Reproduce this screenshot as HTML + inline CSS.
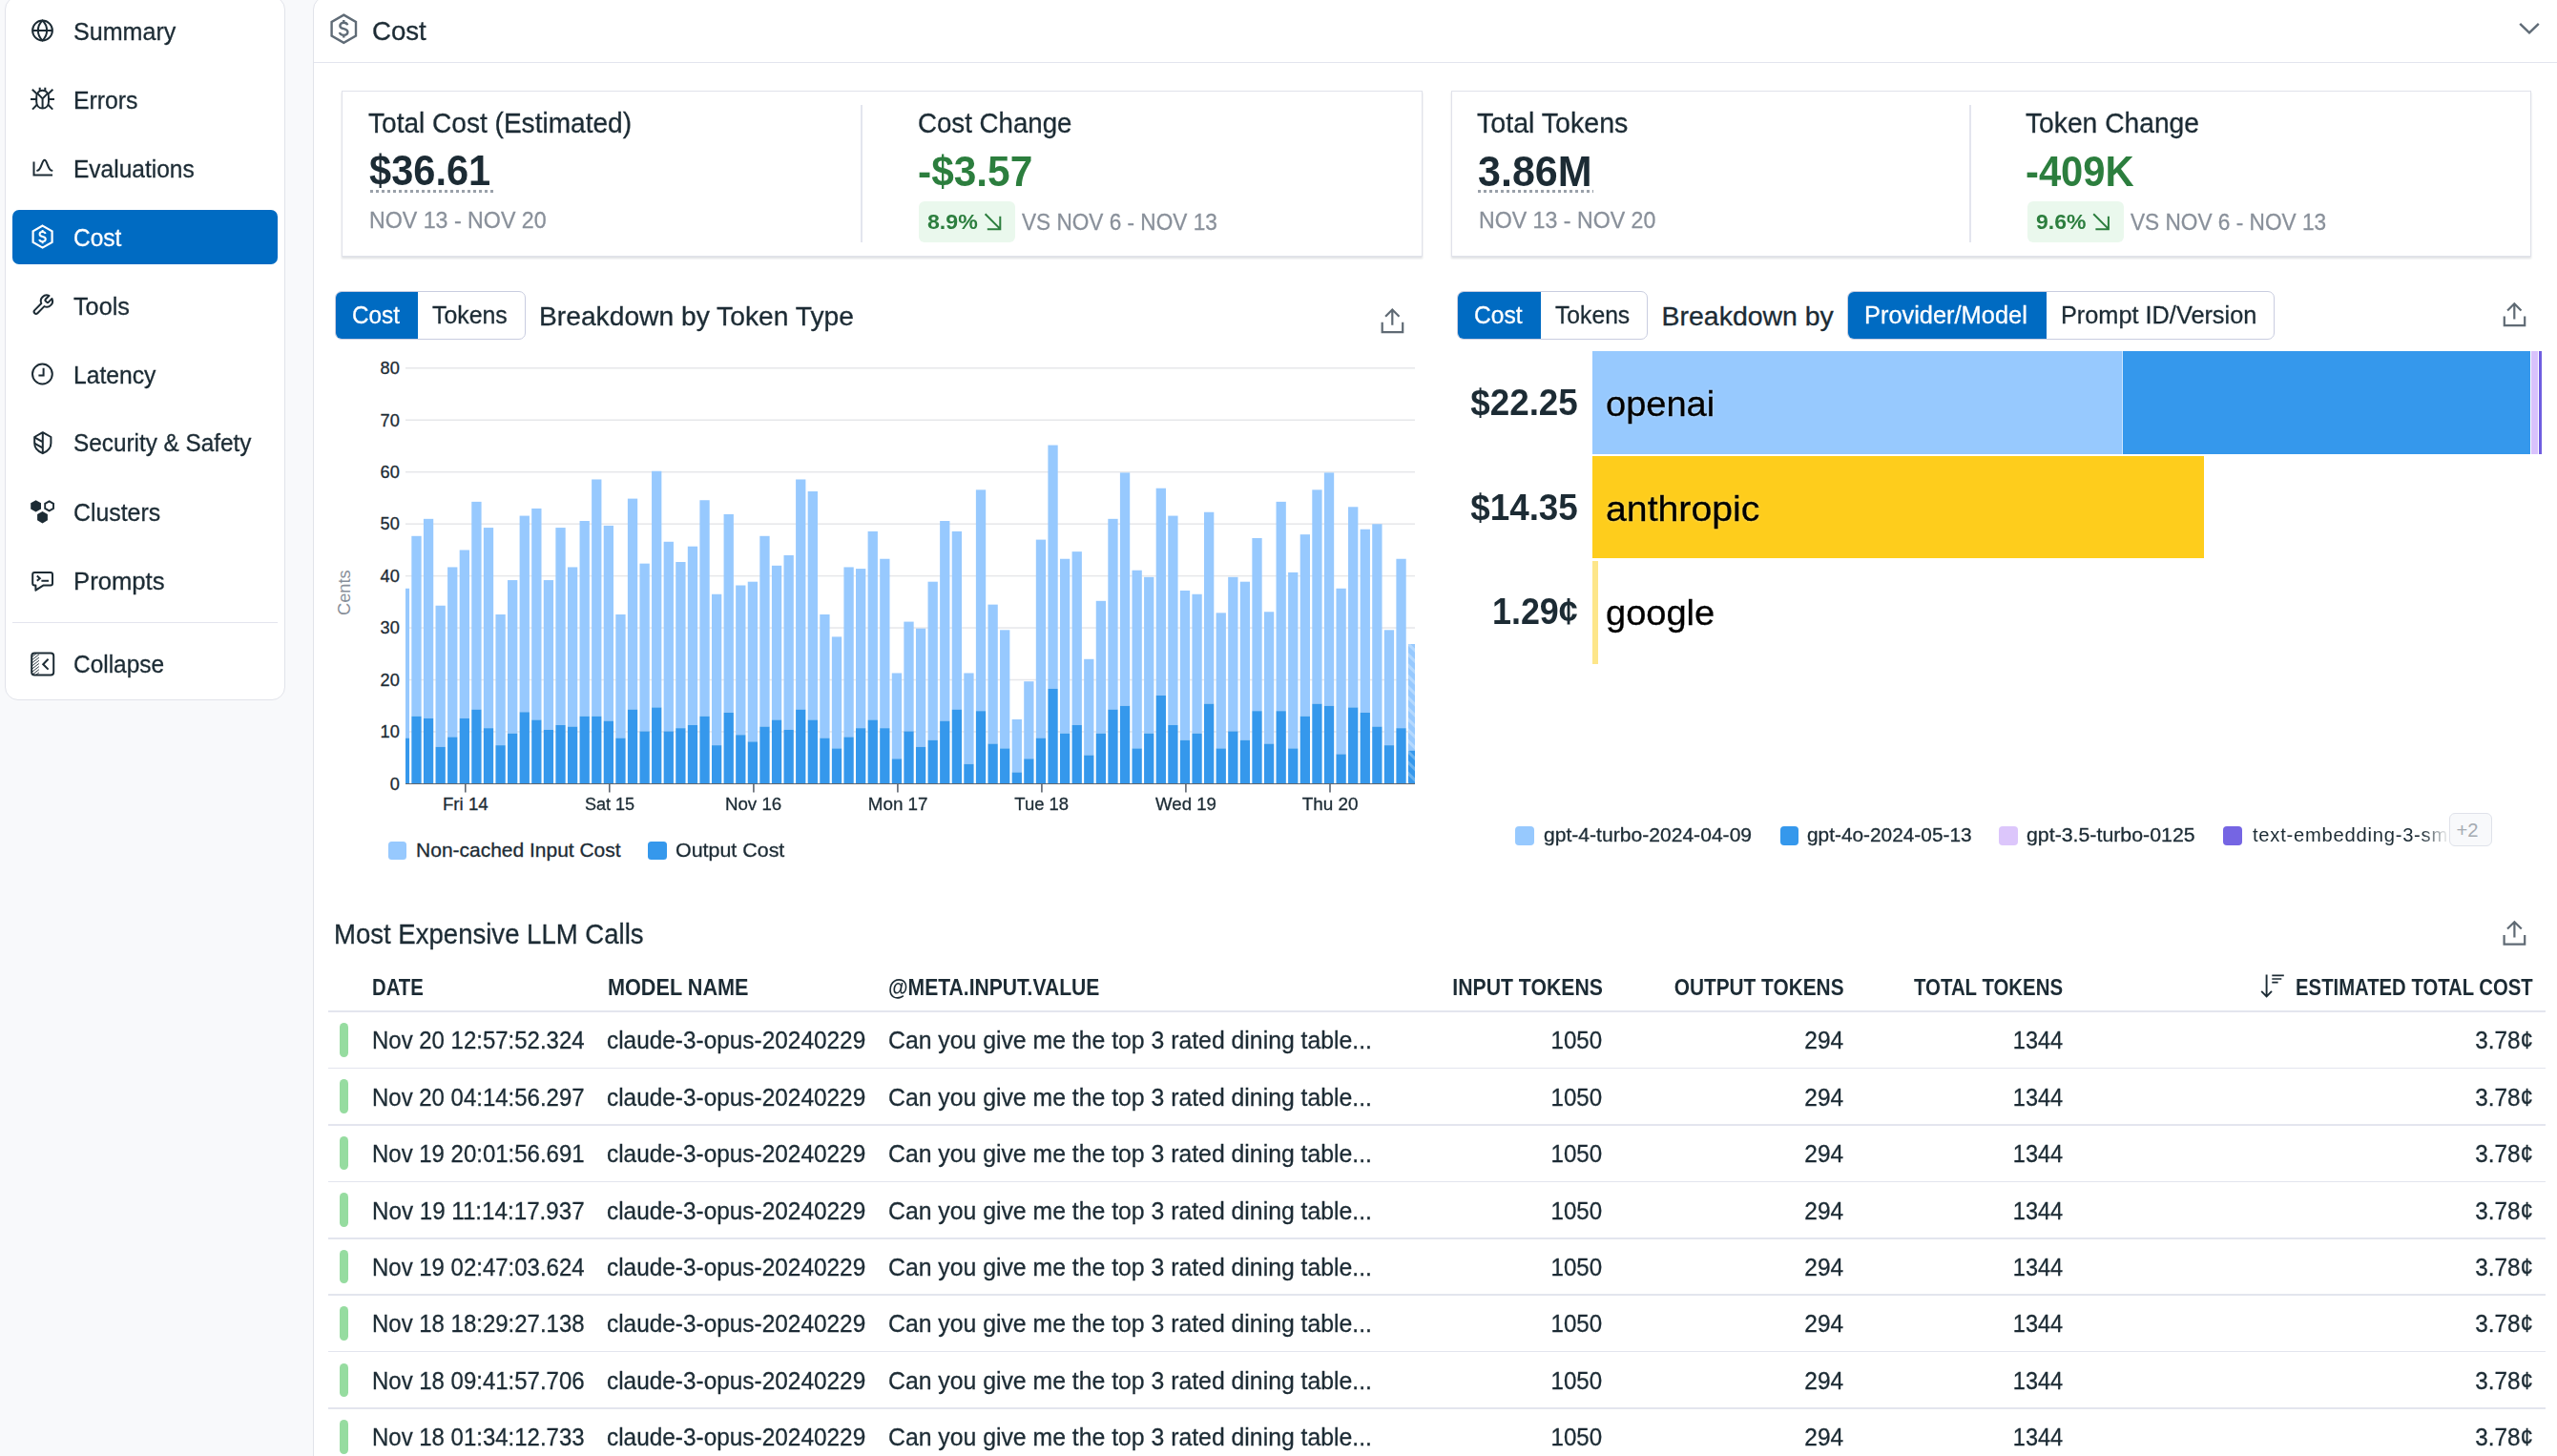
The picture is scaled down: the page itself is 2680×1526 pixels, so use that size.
<!DOCTYPE html>
<html><head><meta charset="utf-8">
<style>
html,body{margin:0;padding:0;background:#f8f9fb;}
#root{position:relative;width:2680px;height:1526px;overflow:hidden;background:#f8f9fb;font-family:"Liberation Sans",sans-serif;}
.a{position:absolute;box-sizing:border-box;}
.t{position:absolute;line-height:1;white-space:nowrap;font-family:"Liberation Sans",sans-serif;}
</style></head><body><div id="root">
<!-- sidebar card -->
<div class="a" style="left:5px;top:-4px;width:294px;height:738px;background:#fff;border:1.5px solid #e1e3ea;border-radius:14px;"></div>
<div class="a" style="left:13px;top:220px;width:278px;height:57px;background:#006bc2;border-radius:7px;"></div>
<div class="a" style="left:13px;top:651.8px;width:278px;height:1.5px;background:#e3e5ee;"></div>
<!-- main panel -->
<div class="a" style="left:328px;top:-4px;width:2400px;height:1600px;background:#fff;border:1.5px solid #e1e3ea;border-radius:14px;"></div>
<div class="a" style="left:329px;top:64.6px;width:2360px;height:1.5px;background:#e3e5ee;"></div>
<!-- stat cards -->
<div class="a" style="left:358px;top:95px;width:1133px;height:173.5px;background:#fff;border:1.5px solid #e0e2ea;box-shadow:0 1.5px 2px rgba(30,40,60,.14);"></div>
<div class="a" style="left:1520.5px;top:95px;width:1132px;height:173.5px;background:#fff;border:1.5px solid #e0e2ea;box-shadow:0 1.5px 2px rgba(30,40,60,.14);"></div>
<div class="a" style="left:902.4px;top:110px;width:2px;height:144px;background:#e3e5ee;"></div>
<div class="a" style="left:2064.4px;top:110px;width:2px;height:144px;background:#e3e5ee;"></div>
<div class="a" style="left:963px;top:211px;width:100.6px;height:43px;background:#eaf8ed;border-radius:6px;"></div>
<div class="a" style="left:2125px;top:211px;width:100.6px;height:43px;background:#eaf8ed;border-radius:6px;"></div>
<div class="a" style="left:387.5px;top:199px;width:129px;height:3px;background:repeating-linear-gradient(90deg,#9aa1a9 0 3px,transparent 3px 6px);"></div>
<div class="a" style="left:1549.4px;top:199px;width:121px;height:3px;background:repeating-linear-gradient(90deg,#9aa1a9 0 3px,transparent 3px 6px);"></div>
<!-- segmented controls -->
<div class="a" style="left:351px;top:305.3px;width:199.5px;height:50.4px;border:1.5px solid #c9cde0;border-radius:7px;overflow:hidden;background:#fff;"><div class="a" style="left:-1.5px;top:-1.5px;width:87.5px;height:50.4px;background:#006bc2;"></div></div>
<div class="a" style="left:1527.1px;top:305.3px;width:199.8px;height:50.4px;border:1.5px solid #c9cde0;border-radius:7px;overflow:hidden;background:#fff;"><div class="a" style="left:-1.5px;top:-1.5px;width:88.3px;height:50.4px;background:#006bc2;"></div></div>
<div class="a" style="left:1936.1px;top:305.2px;width:448px;height:50.5px;border:1.5px solid #c9cde0;border-radius:7px;overflow:hidden;background:#fff;"><div class="a" style="left:-1.5px;top:-1.5px;width:209.2px;height:50.5px;background:#006bc2;"></div></div>
<!-- left chart -->
<svg class="a" style="left:425px;top:350px;" width="1058" height="490" viewBox="0 0 1058 490">
<defs>
<pattern id="hatchL" patternUnits="userSpaceOnUse" width="8" height="8" patternTransform="rotate(-45)"><rect width="8" height="8" fill="#97c9fe"/><rect width="3" height="8" fill="#b5d9fe"/></pattern>
<pattern id="hatchD" patternUnits="userSpaceOnUse" width="8" height="8" patternTransform="rotate(-45)"><rect width="8" height="8" fill="#3598ec"/><rect width="3" height="8" fill="#6ab3f1"/></pattern>
</defs>
<rect x='0' y='35.05' width='1058' height='1.5' fill='#e6e7ea'/>
<rect x='0' y='89.50' width='1058' height='1.5' fill='#e6e7ea'/>
<rect x='0' y='143.95' width='1058' height='1.5' fill='#e6e7ea'/>
<rect x='0' y='198.40' width='1058' height='1.5' fill='#e6e7ea'/>
<rect x='0' y='252.85' width='1058' height='1.5' fill='#e6e7ea'/>
<rect x='0' y='307.30' width='1058' height='1.5' fill='#e6e7ea'/>
<rect x='0' y='361.75' width='1058' height='1.5' fill='#e6e7ea'/>
<rect x='0' y='416.20' width='1058' height='1.5' fill='#e6e7ea'/>
<rect x='-6.25' y='266.76' width='10.3' height='156.74' fill='#97c9fe'/>
<rect x='-6.25' y='423.51' width='10.3' height='47.89' fill='#3598ec'/>
<rect x='6.34' y='211.79' width='10.3' height='188.85' fill='#97c9fe'/>
<rect x='6.34' y='400.65' width='10.3' height='70.75' fill='#3598ec'/>
<rect x='18.92' y='193.83' width='10.3' height='208.99' fill='#97c9fe'/>
<rect x='18.92' y='402.82' width='10.3' height='68.58' fill='#3598ec'/>
<rect x='31.51' y='284.72' width='10.3' height='148.04' fill='#97c9fe'/>
<rect x='31.51' y='432.76' width='10.3' height='38.64' fill='#3598ec'/>
<rect x='44.09' y='244.45' width='10.3' height='177.97' fill='#97c9fe'/>
<rect x='44.09' y='422.42' width='10.3' height='48.98' fill='#3598ec'/>
<rect x='56.68' y='226.49' width='10.3' height='176.34' fill='#97c9fe'/>
<rect x='56.68' y='402.82' width='10.3' height='68.58' fill='#3598ec'/>
<rect x='69.27' y='175.87' width='10.3' height='217.70' fill='#97c9fe'/>
<rect x='69.27' y='393.57' width='10.3' height='77.83' fill='#3598ec'/>
<rect x='81.85' y='203.08' width='10.3' height='210.08' fill='#97c9fe'/>
<rect x='81.85' y='413.17' width='10.3' height='58.23' fill='#3598ec'/>
<rect x='94.44' y='293.97' width='10.3' height='137.15' fill='#97c9fe'/>
<rect x='94.44' y='431.13' width='10.3' height='40.27' fill='#3598ec'/>
<rect x='107.02' y='258.05' width='10.3' height='160.55' fill='#97c9fe'/>
<rect x='107.02' y='418.61' width='10.3' height='52.79' fill='#3598ec'/>
<rect x='119.61' y='190.57' width='10.3' height='205.73' fill='#97c9fe'/>
<rect x='119.61' y='396.29' width='10.3' height='75.11' fill='#3598ec'/>
<rect x='132.20' y='182.95' width='10.3' height='221.51' fill='#97c9fe'/>
<rect x='132.20' y='404.46' width='10.3' height='66.94' fill='#3598ec'/>
<rect x='144.78' y='258.05' width='10.3' height='156.74' fill='#97c9fe'/>
<rect x='144.78' y='414.80' width='10.3' height='56.60' fill='#3598ec'/>
<rect x='157.37' y='203.08' width='10.3' height='206.81' fill='#97c9fe'/>
<rect x='157.37' y='409.90' width='10.3' height='61.50' fill='#3598ec'/>
<rect x='169.95' y='244.45' width='10.3' height='167.08' fill='#97c9fe'/>
<rect x='169.95' y='411.53' width='10.3' height='59.87' fill='#3598ec'/>
<rect x='182.54' y='196.01' width='10.3' height='204.64' fill='#97c9fe'/>
<rect x='182.54' y='400.65' width='10.3' height='70.75' fill='#3598ec'/>
<rect x='195.13' y='152.47' width='10.3' height='248.18' fill='#97c9fe'/>
<rect x='195.13' y='400.65' width='10.3' height='70.75' fill='#3598ec'/>
<rect x='207.71' y='200.91' width='10.3' height='204.64' fill='#97c9fe'/>
<rect x='207.71' y='405.55' width='10.3' height='65.85' fill='#3598ec'/>
<rect x='220.30' y='293.97' width='10.3' height='129.53' fill='#97c9fe'/>
<rect x='220.30' y='423.51' width='10.3' height='47.89' fill='#3598ec'/>
<rect x='232.88' y='172.61' width='10.3' height='220.97' fill='#97c9fe'/>
<rect x='232.88' y='393.57' width='10.3' height='77.83' fill='#3598ec'/>
<rect x='245.47' y='240.64' width='10.3' height='175.79' fill='#97c9fe'/>
<rect x='245.47' y='416.43' width='10.3' height='54.97' fill='#3598ec'/>
<rect x='258.06' y='143.76' width='10.3' height='247.63' fill='#97c9fe'/>
<rect x='258.06' y='391.40' width='10.3' height='80.00' fill='#3598ec'/>
<rect x='270.64' y='217.78' width='10.3' height='198.65' fill='#97c9fe'/>
<rect x='270.64' y='416.43' width='10.3' height='54.97' fill='#3598ec'/>
<rect x='283.23' y='239.01' width='10.3' height='174.16' fill='#97c9fe'/>
<rect x='283.23' y='413.17' width='10.3' height='58.23' fill='#3598ec'/>
<rect x='295.81' y='222.68' width='10.3' height='187.22' fill='#97c9fe'/>
<rect x='295.81' y='409.90' width='10.3' height='61.50' fill='#3598ec'/>
<rect x='308.40' y='174.24' width='10.3' height='226.41' fill='#97c9fe'/>
<rect x='308.40' y='400.65' width='10.3' height='70.75' fill='#3598ec'/>
<rect x='320.99' y='272.75' width='10.3' height='158.38' fill='#97c9fe'/>
<rect x='320.99' y='431.13' width='10.3' height='40.27' fill='#3598ec'/>
<rect x='333.57' y='188.93' width='10.3' height='207.90' fill='#97c9fe'/>
<rect x='333.57' y='396.84' width='10.3' height='74.56' fill='#3598ec'/>
<rect x='346.16' y='263.50' width='10.3' height='156.74' fill='#97c9fe'/>
<rect x='346.16' y='420.24' width='10.3' height='51.16' fill='#3598ec'/>
<rect x='358.74' y='259.69' width='10.3' height='167.63' fill='#97c9fe'/>
<rect x='358.74' y='427.32' width='10.3' height='44.08' fill='#3598ec'/>
<rect x='371.33' y='211.79' width='10.3' height='199.74' fill='#97c9fe'/>
<rect x='371.33' y='411.53' width='10.3' height='59.87' fill='#3598ec'/>
<rect x='383.92' y='242.81' width='10.3' height='161.64' fill='#97c9fe'/>
<rect x='383.92' y='404.46' width='10.3' height='66.94' fill='#3598ec'/>
<rect x='396.50' y='231.93' width='10.3' height='182.87' fill='#97c9fe'/>
<rect x='396.50' y='414.80' width='10.3' height='56.60' fill='#3598ec'/>
<rect x='409.09' y='152.47' width='10.3' height='241.10' fill='#97c9fe'/>
<rect x='409.09' y='393.57' width='10.3' height='77.83' fill='#3598ec'/>
<rect x='421.67' y='164.99' width='10.3' height='239.47' fill='#97c9fe'/>
<rect x='421.67' y='404.46' width='10.3' height='66.94' fill='#3598ec'/>
<rect x='434.26' y='293.97' width='10.3' height='129.53' fill='#97c9fe'/>
<rect x='434.26' y='423.51' width='10.3' height='47.89' fill='#3598ec'/>
<rect x='446.85' y='317.38' width='10.3' height='117.01' fill='#97c9fe'/>
<rect x='446.85' y='434.39' width='10.3' height='37.01' fill='#3598ec'/>
<rect x='459.43' y='244.45' width='10.3' height='177.97' fill='#97c9fe'/>
<rect x='459.43' y='422.42' width='10.3' height='48.98' fill='#3598ec'/>
<rect x='472.02' y='246.08' width='10.3' height='167.08' fill='#97c9fe'/>
<rect x='472.02' y='413.17' width='10.3' height='58.23' fill='#3598ec'/>
<rect x='484.60' y='206.89' width='10.3' height='197.56' fill='#97c9fe'/>
<rect x='484.60' y='404.46' width='10.3' height='66.94' fill='#3598ec'/>
<rect x='497.19' y='235.74' width='10.3' height='177.43' fill='#97c9fe'/>
<rect x='497.19' y='413.17' width='10.3' height='58.23' fill='#3598ec'/>
<rect x='509.78' y='355.47' width='10.3' height='89.80' fill='#97c9fe'/>
<rect x='509.78' y='445.28' width='10.3' height='26.12' fill='#3598ec'/>
<rect x='522.36' y='301.59' width='10.3' height='114.84' fill='#97c9fe'/>
<rect x='522.36' y='416.43' width='10.3' height='54.97' fill='#3598ec'/>
<rect x='534.95' y='308.67' width='10.3' height='124.09' fill='#97c9fe'/>
<rect x='534.95' y='432.76' width='10.3' height='38.64' fill='#3598ec'/>
<rect x='547.53' y='259.69' width='10.3' height='166.00' fill='#97c9fe'/>
<rect x='547.53' y='425.68' width='10.3' height='45.72' fill='#3598ec'/>
<rect x='560.12' y='196.01' width='10.3' height='209.54' fill='#97c9fe'/>
<rect x='560.12' y='405.55' width='10.3' height='65.85' fill='#3598ec'/>
<rect x='572.71' y='206.89' width='10.3' height='186.68' fill='#97c9fe'/>
<rect x='572.71' y='393.57' width='10.3' height='77.83' fill='#3598ec'/>
<rect x='585.29' y='355.47' width='10.3' height='95.24' fill='#97c9fe'/>
<rect x='585.29' y='450.72' width='10.3' height='20.68' fill='#3598ec'/>
<rect x='597.88' y='163.35' width='10.3' height='231.85' fill='#97c9fe'/>
<rect x='597.88' y='395.20' width='10.3' height='76.20' fill='#3598ec'/>
<rect x='610.46' y='283.63' width='10.3' height='145.86' fill='#97c9fe'/>
<rect x='610.46' y='429.49' width='10.3' height='41.91' fill='#3598ec'/>
<rect x='623.05' y='310.30' width='10.3' height='124.09' fill='#97c9fe'/>
<rect x='623.05' y='434.39' width='10.3' height='37.01' fill='#3598ec'/>
<rect x='635.64' y='403.91' width='10.3' height='55.51' fill='#97c9fe'/>
<rect x='635.64' y='459.43' width='10.3' height='11.97' fill='#3598ec'/>
<rect x='648.22' y='364.18' width='10.3' height='81.09' fill='#97c9fe'/>
<rect x='648.22' y='445.28' width='10.3' height='26.12' fill='#3598ec'/>
<rect x='660.81' y='215.60' width='10.3' height='207.90' fill='#97c9fe'/>
<rect x='660.81' y='423.51' width='10.3' height='47.89' fill='#3598ec'/>
<rect x='673.39' y='116.55' width='10.3' height='255.25' fill='#97c9fe'/>
<rect x='673.39' y='371.80' width='10.3' height='99.60' fill='#3598ec'/>
<rect x='685.98' y='235.74' width='10.3' height='182.87' fill='#97c9fe'/>
<rect x='685.98' y='418.61' width='10.3' height='52.79' fill='#3598ec'/>
<rect x='698.57' y='228.12' width='10.3' height='181.78' fill='#97c9fe'/>
<rect x='698.57' y='409.90' width='10.3' height='61.50' fill='#3598ec'/>
<rect x='711.15' y='340.78' width='10.3' height='100.69' fill='#97c9fe'/>
<rect x='711.15' y='441.47' width='10.3' height='29.93' fill='#3598ec'/>
<rect x='723.74' y='279.82' width='10.3' height='138.78' fill='#97c9fe'/>
<rect x='723.74' y='418.61' width='10.3' height='52.79' fill='#3598ec'/>
<rect x='736.32' y='193.83' width='10.3' height='199.74' fill='#97c9fe'/>
<rect x='736.32' y='393.57' width='10.3' height='77.83' fill='#3598ec'/>
<rect x='748.91' y='145.39' width='10.3' height='244.37' fill='#97c9fe'/>
<rect x='748.91' y='389.76' width='10.3' height='81.64' fill='#3598ec'/>
<rect x='761.50' y='247.71' width='10.3' height='186.68' fill='#97c9fe'/>
<rect x='761.50' y='434.39' width='10.3' height='37.01' fill='#3598ec'/>
<rect x='774.08' y='254.79' width='10.3' height='163.82' fill='#97c9fe'/>
<rect x='774.08' y='418.61' width='10.3' height='52.79' fill='#3598ec'/>
<rect x='786.67' y='161.72' width='10.3' height='217.16' fill='#97c9fe'/>
<rect x='786.67' y='378.88' width='10.3' height='92.52' fill='#3598ec'/>
<rect x='799.25' y='190.57' width='10.3' height='219.33' fill='#97c9fe'/>
<rect x='799.25' y='409.90' width='10.3' height='61.50' fill='#3598ec'/>
<rect x='811.84' y='268.94' width='10.3' height='156.74' fill='#97c9fe'/>
<rect x='811.84' y='425.68' width='10.3' height='45.72' fill='#3598ec'/>
<rect x='824.43' y='272.75' width='10.3' height='145.86' fill='#97c9fe'/>
<rect x='824.43' y='418.61' width='10.3' height='52.79' fill='#3598ec'/>
<rect x='837.01' y='186.76' width='10.3' height='200.83' fill='#97c9fe'/>
<rect x='837.01' y='387.59' width='10.3' height='83.81' fill='#3598ec'/>
<rect x='849.60' y='292.34' width='10.3' height='142.05' fill='#97c9fe'/>
<rect x='849.60' y='434.39' width='10.3' height='37.01' fill='#3598ec'/>
<rect x='862.18' y='254.79' width='10.3' height='161.64' fill='#97c9fe'/>
<rect x='862.18' y='416.43' width='10.3' height='54.97' fill='#3598ec'/>
<rect x='874.77' y='259.69' width='10.3' height='166.00' fill='#97c9fe'/>
<rect x='874.77' y='425.68' width='10.3' height='45.72' fill='#3598ec'/>
<rect x='887.36' y='213.97' width='10.3' height='181.24' fill='#97c9fe'/>
<rect x='887.36' y='395.20' width='10.3' height='76.20' fill='#3598ec'/>
<rect x='899.94' y='291.25' width='10.3' height='138.24' fill='#97c9fe'/>
<rect x='899.94' y='429.49' width='10.3' height='41.91' fill='#3598ec'/>
<rect x='912.53' y='175.87' width='10.3' height='219.33' fill='#97c9fe'/>
<rect x='912.53' y='395.20' width='10.3' height='76.20' fill='#3598ec'/>
<rect x='925.11' y='249.89' width='10.3' height='184.50' fill='#97c9fe'/>
<rect x='925.11' y='434.39' width='10.3' height='37.01' fill='#3598ec'/>
<rect x='937.70' y='210.16' width='10.3' height='190.49' fill='#97c9fe'/>
<rect x='937.70' y='400.65' width='10.3' height='70.75' fill='#3598ec'/>
<rect x='950.29' y='163.35' width='10.3' height='224.23' fill='#97c9fe'/>
<rect x='950.29' y='387.59' width='10.3' height='83.81' fill='#3598ec'/>
<rect x='962.87' y='145.39' width='10.3' height='244.37' fill='#97c9fe'/>
<rect x='962.87' y='389.76' width='10.3' height='81.64' fill='#3598ec'/>
<rect x='975.46' y='266.76' width='10.3' height='173.62' fill='#97c9fe'/>
<rect x='975.46' y='440.38' width='10.3' height='31.02' fill='#3598ec'/>
<rect x='988.04' y='181.31' width='10.3' height='210.08' fill='#97c9fe'/>
<rect x='988.04' y='391.40' width='10.3' height='80.00' fill='#3598ec'/>
<rect x='1000.63' y='204.72' width='10.3' height='192.12' fill='#97c9fe'/>
<rect x='1000.63' y='396.84' width='10.3' height='74.56' fill='#3598ec'/>
<rect x='1013.22' y='199.27' width='10.3' height='212.26' fill='#97c9fe'/>
<rect x='1013.22' y='411.53' width='10.3' height='59.87' fill='#3598ec'/>
<rect x='1025.80' y='310.30' width='10.3' height='120.82' fill='#97c9fe'/>
<rect x='1025.80' y='431.13' width='10.3' height='40.27' fill='#3598ec'/>
<rect x='1038.39' y='235.74' width='10.3' height='177.43' fill='#97c9fe'/>
<rect x='1038.39' y='413.17' width='10.3' height='58.23' fill='#3598ec'/>
<rect x='1050.97' y='325.00' width='10.3' height='111.57' fill='url(#hatchL)'/>
<rect x='1050.97' y='436.57' width='10.3' height='34.83' fill='url(#hatchD)'/>
</svg>
<div class="a" style="left:425px;top:820.8px;width:1058px;height:1.6px;background:#5f6670;"></div>
<div class="a" style="left:407.2px;top:881.8px;width:18.8px;height:19.7px;background:#97c9fe;border-radius:3.5px;"></div>
<div class="a" style="left:679px;top:881.8px;width:19.7px;height:19.7px;background:#3598ec;border-radius:3.5px;"></div>
<div class="t" style="font-size:18.3px;color:#89909a;transform:rotate(-90deg);transform-origin:0 0;top:645.2px;left:351.8px;">Cents</div>
<!-- right bar chart -->
<div class="a" style="left:1669.4px;top:368px;width:554.6px;height:107.7px;background:#97c9fe;"></div><div class="a" style="left:2224px;top:368px;width:1px;height:107.7px;background:#cfe6fe;"></div>
<div class="a" style="left:2225px;top:368px;width:426.8px;height:107.7px;background:#3598ec;"></div>
<div class="a" style="left:2652.8px;top:368px;width:7.4px;height:107.7px;background:#d8c2fc;"></div>
<div class="a" style="left:2661px;top:368px;width:2.6px;height:107.7px;background:#6f5ee0;"></div>
<div class="a" style="left:1669.4px;top:478px;width:640.6px;height:107.3px;background:#fecd1c;"></div>
<div class="a" style="left:1669.4px;top:588px;width:5.6px;height:108px;background:#fde68a;"></div>
<div class="a" style="left:1588.1px;top:866px;width:19.7px;height:19.8px;background:#97c9fe;border-radius:4px;"></div>
<div class="a" style="left:1865.5px;top:866px;width:19.7px;height:19.8px;background:#3598ec;border-radius:4px;"></div>
<div class="a" style="left:2095px;top:866px;width:19.7px;height:19.8px;background:#dcc6fb;border-radius:4px;"></div>
<div class="a" style="left:2330px;top:866px;width:19.7px;height:19.8px;background:#7565e3;border-radius:4px;"></div>
<div class="a" style="left:2361px;top:860px;width:206px;height:32px;overflow:hidden;-webkit-mask-image:linear-gradient(90deg,#000 86%,transparent 100%);mask-image:linear-gradient(90deg,#000 86%,transparent 100%);"><div class="t" style="left:0;top:4.9px;font-size:20.2px;color:#1c2b34;letter-spacing:0.75px;">text-embedding-3-small</div></div>
<div class="a" style="left:2566.6px;top:852.3px;width:45px;height:35.2px;background:#f8f9fb;border:1.5px solid #dfe2ea;border-radius:6px;"></div>
<div class="t" style="left:2574.5px;top:859.5px;font-size:20.2px;color:#a5abb2;">+2</div>
<!-- table -->
<div class="a" style="left:344px;top:1059.20px;width:2324px;height:1.6px;background:#e3e5ee;"></div>
<div class="a" style="left:344px;top:1118.65px;width:2324px;height:1.6px;background:#e3e5ee;"></div>
<div class="a" style="left:344px;top:1178.10px;width:2324px;height:1.6px;background:#e3e5ee;"></div>
<div class="a" style="left:344px;top:1237.55px;width:2324px;height:1.6px;background:#e3e5ee;"></div>
<div class="a" style="left:344px;top:1297.00px;width:2324px;height:1.6px;background:#e3e5ee;"></div>
<div class="a" style="left:344px;top:1356.45px;width:2324px;height:1.6px;background:#e3e5ee;"></div>
<div class="a" style="left:344px;top:1415.90px;width:2324px;height:1.6px;background:#e3e5ee;"></div>
<div class="a" style="left:344px;top:1475.35px;width:2324px;height:1.6px;background:#e3e5ee;"></div>
<div class="a" style="left:356px;top:1072.00px;width:9px;height:35.5px;background:#96dca0;border-radius:4.5px;"></div>
<div class="a" style="left:356px;top:1131.45px;width:9px;height:35.5px;background:#96dca0;border-radius:4.5px;"></div>
<div class="a" style="left:356px;top:1190.90px;width:9px;height:35.5px;background:#96dca0;border-radius:4.5px;"></div>
<div class="a" style="left:356px;top:1250.35px;width:9px;height:35.5px;background:#96dca0;border-radius:4.5px;"></div>
<div class="a" style="left:356px;top:1309.80px;width:9px;height:35.5px;background:#96dca0;border-radius:4.5px;"></div>
<div class="a" style="left:356px;top:1369.25px;width:9px;height:35.5px;background:#96dca0;border-radius:4.5px;"></div>
<div class="a" style="left:356px;top:1428.70px;width:9px;height:35.5px;background:#96dca0;border-radius:4.5px;"></div>
<div class="a" style="left:356px;top:1488.15px;width:9px;height:35.5px;background:#96dca0;border-radius:4.5px;"></div>
<div class=t style='left:76.70px;top:21.17px;font-size:25.43px;font-weight:400;color:#1c2b34;transform:scaleX(0.9865);transform-origin:left;-webkit-text-stroke:0.3px #1c2b34;'>Summary</div>
<div class=t style='left:76.70px;top:92.87px;font-size:25.43px;font-weight:400;color:#1c2b34;transform:scaleX(0.9754);transform-origin:left;-webkit-text-stroke:0.3px #1c2b34;'>Errors</div>
<div class=t style='left:76.70px;top:164.97px;font-size:25.43px;font-weight:400;color:#1c2b34;transform:scaleX(0.9640);transform-origin:left;-webkit-text-stroke:0.3px #1c2b34;'>Evaluations</div>
<div class=t style='left:76.70px;top:236.97px;font-size:25.43px;font-weight:400;color:#ffffff;transform:scaleX(0.9621);transform-origin:left;-webkit-text-stroke:0.3px #ffffff;'>Cost</div>
<div class=t style='left:76.70px;top:309.07px;font-size:25.43px;font-weight:400;color:#1c2b34;transform:scaleX(0.9923);transform-origin:left;-webkit-text-stroke:0.3px #1c2b34;'>Tools</div>
<div class=t style='left:76.70px;top:380.97px;font-size:25.43px;font-weight:400;color:#1c2b34;transform:scaleX(0.9703);transform-origin:left;-webkit-text-stroke:0.3px #1c2b34;'>Latency</div>
<div class=t style='left:76.70px;top:452.07px;font-size:25.43px;font-weight:400;color:#1c2b34;transform:scaleX(0.9565);transform-origin:left;-webkit-text-stroke:0.3px #1c2b34;'>Security &amp; Safety</div>
<div class=t style='left:76.70px;top:524.97px;font-size:25.43px;font-weight:400;color:#1c2b34;transform:scaleX(0.9771);transform-origin:left;-webkit-text-stroke:0.3px #1c2b34;'>Clusters</div>
<div class=t style='left:76.70px;top:596.97px;font-size:25.43px;font-weight:400;color:#1c2b34;transform:scaleX(1.0100);transform-origin:left;-webkit-text-stroke:0.3px #1c2b34;'>Prompts</div>
<div class=t style='left:76.70px;top:684.47px;font-size:25.43px;font-weight:400;color:#1c2b34;transform:scaleX(0.9614);transform-origin:left;-webkit-text-stroke:0.3px #1c2b34;'>Collapse</div>
<div class=t style='left:389.90px;top:17.63px;font-size:28.44px;font-weight:400;color:#1c2b34;transform:scaleX(0.9712);transform-origin:left;-webkit-text-stroke:0.3px #1c2b34;'>Cost</div>
<div class=t style='left:386.40px;top:115.00px;font-size:29.06px;font-weight:400;color:#1c2b34;transform:scaleX(0.9660);transform-origin:left;-webkit-text-stroke:0.3px #1c2b34;'>Total Cost (Estimated)</div>
<div class=t style='left:386.80px;top:158.39px;font-size:43.6px;font-weight:700;color:#1c2b34;transform:scaleX(0.9539);transform-origin:left;'>$36.61</div>
<div class=t style='left:387.20px;top:218.68px;font-size:24.6px;font-weight:400;color:#89909a;transform:scaleX(0.9430);transform-origin:left;-webkit-text-stroke:0.3px #89909a;'>NOV 13 - NOV 20</div>
<div class=t style='left:961.80px;top:114.80px;font-size:29.06px;font-weight:400;color:#1c2b34;transform:scaleX(0.9519);transform-origin:left;-webkit-text-stroke:0.3px #1c2b34;'>Cost Change</div>
<div class=t style='left:961.80px;top:158.59px;font-size:43.6px;font-weight:700;color:#2c7e3e;transform:scaleX(0.9732);transform-origin:left;'>-$3.57</div>
<div class=t style='left:971.90px;top:221.27px;font-size:22.84px;font-weight:700;color:#2c7e3e;transform:scaleX(1.0125);transform-origin:left;'>8.9%</div>
<div class=t style='left:1071.40px;top:220.88px;font-size:24.6px;font-weight:400;color:#89909a;transform:scaleX(0.9192);transform-origin:left;-webkit-text-stroke:0.3px #89909a;'>VS NOV 6 - NOV 13</div>
<div class=t style='left:1548.40px;top:114.70px;font-size:29.06px;font-weight:400;color:#1c2b34;transform:scaleX(0.9842);transform-origin:left;-webkit-text-stroke:0.3px #1c2b34;'>Total Tokens</div>
<div class=t style='left:1549.10px;top:158.59px;font-size:43.6px;font-weight:700;color:#1c2b34;transform:scaleX(0.9870);transform-origin:left;'>3.86M</div>
<div class=t style='left:1549.70px;top:218.68px;font-size:24.6px;font-weight:400;color:#89909a;transform:scaleX(0.9414);transform-origin:left;-webkit-text-stroke:0.3px #89909a;'>NOV 13 - NOV 20</div>
<div class=t style='left:2123.20px;top:115.20px;font-size:29.06px;font-weight:400;color:#1c2b34;transform:scaleX(0.9715);transform-origin:left;-webkit-text-stroke:0.3px #1c2b34;'>Token Change</div>
<div class=t style='left:2123.20px;top:158.59px;font-size:43.6px;font-weight:700;color:#2c7e3e;transform:scaleX(0.9568);transform-origin:left;'>-409K</div>
<div class=t style='left:2133.70px;top:221.27px;font-size:22.84px;font-weight:700;color:#2c7e3e;transform:scaleX(1.0068);transform-origin:left;'>9.6%</div>
<div class=t style='left:2233.40px;top:220.88px;font-size:24.6px;font-weight:400;color:#89909a;transform:scaleX(0.9206);transform-origin:left;-webkit-text-stroke:0.3px #89909a;'>VS NOV 6 - NOV 13</div>
<div class=t style='left:368.70px;top:318.01px;font-size:25.74px;font-weight:400;color:#ffffff;transform:scaleX(0.9448);transform-origin:left;-webkit-text-stroke:0.3px #ffffff;'>Cost</div>
<div class=t style='left:453.20px;top:318.01px;font-size:25.74px;font-weight:400;color:#1c2b34;transform:scaleX(0.9663);transform-origin:left;-webkit-text-stroke:0.3px #1c2b34;'>Tokens</div>
<div class=t style='left:564.60px;top:317.03px;font-size:28.44px;font-weight:400;color:#1c2b34;transform:scaleX(0.9921);transform-origin:left;-webkit-text-stroke:0.3px #1c2b34;'>Breakdown by Token Type</div>
<div class=t style='left:1545.40px;top:317.91px;font-size:25.74px;font-weight:400;color:#ffffff;transform:scaleX(0.9542);transform-origin:left;-webkit-text-stroke:0.3px #ffffff;'>Cost</div>
<div class=t style='left:1629.90px;top:317.91px;font-size:25.74px;font-weight:400;color:#1c2b34;transform:scaleX(0.9590);transform-origin:left;-webkit-text-stroke:0.3px #1c2b34;'>Tokens</div>
<div class=t style='left:1741.60px;top:317.23px;font-size:28.44px;font-weight:400;color:#1c2b34;-webkit-text-stroke:0.3px #1c2b34;'>Breakdown by</div>
<div class=t style='left:1953.90px;top:317.91px;font-size:25.74px;font-weight:400;color:#ffffff;transform:scaleX(0.9868);transform-origin:left;-webkit-text-stroke:0.3px #ffffff;'>Provider/Model</div>
<div class=t style='left:2160.20px;top:317.91px;font-size:25.74px;font-weight:400;color:#1c2b34;transform:scaleX(0.9831);transform-origin:left;-webkit-text-stroke:0.3px #1c2b34;'>Prompt ID/Version</div>
<div class=t style='left:398.60px;top:377.13px;font-size:18.16px;font-weight:400;color:#1c2b34;-webkit-text-stroke:0.3px #1c2b34;'>80</div>
<div class=t style='left:398.60px;top:431.58px;font-size:18.16px;font-weight:400;color:#1c2b34;-webkit-text-stroke:0.3px #1c2b34;'>70</div>
<div class=t style='left:398.60px;top:486.03px;font-size:18.16px;font-weight:400;color:#1c2b34;-webkit-text-stroke:0.3px #1c2b34;'>60</div>
<div class=t style='left:398.60px;top:540.48px;font-size:18.16px;font-weight:400;color:#1c2b34;-webkit-text-stroke:0.3px #1c2b34;'>50</div>
<div class=t style='left:398.60px;top:594.93px;font-size:18.16px;font-weight:400;color:#1c2b34;-webkit-text-stroke:0.3px #1c2b34;'>40</div>
<div class=t style='left:398.60px;top:649.38px;font-size:18.16px;font-weight:400;color:#1c2b34;-webkit-text-stroke:0.3px #1c2b34;'>30</div>
<div class=t style='left:398.60px;top:703.83px;font-size:18.16px;font-weight:400;color:#1c2b34;-webkit-text-stroke:0.3px #1c2b34;'>20</div>
<div class=t style='left:398.60px;top:758.28px;font-size:18.16px;font-weight:400;color:#1c2b34;-webkit-text-stroke:0.3px #1c2b34;'>10</div>
<div class=t style='left:408.69px;top:812.73px;font-size:18.16px;font-weight:400;color:#1c2b34;-webkit-text-stroke:0.3px #1c2b34;'>0</div>
<div class=t style='left:463.93px;top:833.69px;font-size:18.68px;font-weight:400;color:#1c2b34;-webkit-text-stroke:0.3px #1c2b34;'>Fri 14</div>
<div class=t style='left:611.84px;top:833.69px;font-size:18.68px;font-weight:400;color:#1c2b34;transform:scaleX(0.9669);transform-origin:center;-webkit-text-stroke:0.3px #1c2b34;'>Sat 15</div>
<div class=t style='left:760.28px;top:833.69px;font-size:18.68px;font-weight:400;color:#1c2b34;transform:scaleX(1.0022);transform-origin:center;-webkit-text-stroke:0.3px #1c2b34;'>Nov 16</div>
<div class=t style='left:909.76px;top:833.69px;font-size:18.68px;font-weight:400;color:#1c2b34;transform:scaleX(1.0083);transform-origin:center;-webkit-text-stroke:0.3px #1c2b34;'>Mon 17</div>
<div class=t style='left:1063.20px;top:833.69px;font-size:18.68px;font-weight:400;color:#1c2b34;transform:scaleX(0.9886);transform-origin:center;-webkit-text-stroke:0.3px #1c2b34;'>Tue 18</div>
<div class=t style='left:1210.95px;top:833.69px;font-size:18.68px;font-weight:400;color:#1c2b34;transform:scaleX(0.9966);transform-origin:center;-webkit-text-stroke:0.3px #1c2b34;'>Wed 19</div>
<div class=t style='left:1364.92px;top:833.69px;font-size:18.68px;font-weight:400;color:#1c2b34;transform:scaleX(1.0113);transform-origin:center;-webkit-text-stroke:0.3px #1c2b34;'>Thu 20</div>
<div class=t style='left:436.10px;top:881.05px;font-size:20.97px;font-weight:400;color:#1c2b34;-webkit-text-stroke:0.3px #1c2b34;'>Non-cached Input Cost</div>
<div class=t style='left:708.30px;top:881.05px;font-size:20.97px;font-weight:400;color:#1c2b34;transform:scaleX(1.0215);transform-origin:left;-webkit-text-stroke:0.3px #1c2b34;'>Output Cost</div>
<div class=t style='left:1538.14px;top:403.73px;font-size:37.89px;font-weight:700;color:#1c2b34;transform:scaleX(0.9727);transform-origin:right;'>$22.25</div>
<div class=t style='left:1538.14px;top:513.73px;font-size:37.89px;font-weight:700;color:#1c2b34;transform:scaleX(0.9727);transform-origin:right;'>$14.35</div>
<div class=t style='left:1558.82px;top:623.23px;font-size:37.89px;font-weight:700;color:#1c2b34;transform:scaleX(0.9474);transform-origin:right;'>1.29¢</div>
<div class=t style='left:1683.00px;top:405.00px;font-size:37.68px;font-weight:400;color:#000000;transform:scaleX(1.0094);transform-origin:left;-webkit-text-stroke:0.3px #000000;text-shadow:0 0 3px rgba(255,255,255,.6);'>openai</div>
<div class=t style='left:1683.00px;top:514.90px;font-size:37.68px;font-weight:400;color:#000000;transform:scaleX(1.0414);transform-origin:left;-webkit-text-stroke:0.3px #000000;text-shadow:0 0 3px rgba(255,255,255,.5);'>anthropic</div>
<div class=t style='left:1683.00px;top:624.10px;font-size:37.68px;font-weight:400;color:#000000;transform:scaleX(1.0094);transform-origin:left;-webkit-text-stroke:0.3px #000000;'>google</div>
<div class=t style='left:1618.00px;top:864.75px;font-size:20.97px;font-weight:400;color:#1c2b34;transform:scaleX(1.0059);transform-origin:left;-webkit-text-stroke:0.3px #1c2b34;'>gpt-4-turbo-2024-04-09</div>
<div class=t style='left:1893.50px;top:864.75px;font-size:20.97px;font-weight:400;color:#1c2b34;transform:scaleX(0.9936);transform-origin:left;-webkit-text-stroke:0.3px #1c2b34;'>gpt-4o-2024-05-13</div>
<div class=t style='left:2123.60px;top:864.75px;font-size:20.97px;font-weight:400;color:#1c2b34;transform:scaleX(1.0167);transform-origin:left;-webkit-text-stroke:0.3px #1c2b34;'>gpt-3.5-turbo-0125</div>
<div class=t style='left:349.80px;top:965.20px;font-size:29.06px;font-weight:400;color:#1c2b34;transform:scaleX(0.9484);transform-origin:left;-webkit-text-stroke:0.3px #1c2b34;'>Most Expensive LLM Calls</div>
<div class=t style='left:389.70px;top:1024.10px;font-size:23.15px;font-weight:700;color:#1c2b34;transform:scaleX(0.8779);transform-origin:left;'>DATE</div>
<div class=t style='left:636.60px;top:1024.10px;font-size:23.15px;font-weight:700;color:#1c2b34;transform:scaleX(0.9353);transform-origin:left;'>MODEL NAME</div>
<div class=t style='left:931.40px;top:1024.10px;font-size:23.15px;font-weight:700;color:#1c2b34;transform:scaleX(0.9118);transform-origin:left;'>@META.INPUT.VALUE</div>
<div class=t style='left:1507.92px;top:1024.10px;font-size:23.15px;font-weight:700;color:#1c2b34;transform:scaleX(0.9169);transform-origin:right;'>INPUT TOKENS</div>
<div class=t style='left:1734.92px;top:1024.10px;font-size:23.15px;font-weight:700;color:#1c2b34;transform:scaleX(0.9004);transform-origin:right;'>OUTPUT TOKENS</div>
<div class=t style='left:1984.80px;top:1024.10px;font-size:23.15px;font-weight:700;color:#1c2b34;transform:scaleX(0.8814);transform-origin:right;'>TOTAL TOKENS</div>
<div class=t style='left:2371.11px;top:1024.10px;font-size:23.15px;font-weight:700;color:#1c2b34;transform:scaleX(0.8763);transform-origin:right;'>ESTIMATED TOTAL COST</div>
<div class=t style='left:389.70px;top:1078.15px;font-size:25.22px;font-weight:400;color:#1c2b34;transform:scaleX(0.9506);transform-origin:left;-webkit-text-stroke:0.3px #1c2b34;'>Nov 20 12:57:52.324</div>
<div class=t style='left:635.50px;top:1078.15px;font-size:25.22px;font-weight:400;color:#1c2b34;transform:scaleX(0.9671);transform-origin:left;-webkit-text-stroke:0.3px #1c2b34;'>claude-3-opus-20240229</div>
<div class=t style='left:931.40px;top:1078.15px;font-size:25.22px;font-weight:400;color:#1c2b34;transform:scaleX(0.9827);transform-origin:left;-webkit-text-stroke:0.3px #1c2b34;'>Can you give me the top 3 rated dining table...</div>
<div class=t style='left:1622.99px;top:1078.15px;font-size:25.22px;font-weight:400;color:#1c2b34;transform:scaleX(0.9553);transform-origin:right;-webkit-text-stroke:0.3px #1c2b34;'>1050</div>
<div class=t style='left:1890.42px;top:1078.15px;font-size:25.22px;font-weight:400;color:#1c2b34;transform:scaleX(0.9696);transform-origin:right;-webkit-text-stroke:0.3px #1c2b34;'>294</div>
<div class=t style='left:2105.69px;top:1078.15px;font-size:25.22px;font-weight:400;color:#1c2b34;transform:scaleX(0.9321);transform-origin:right;-webkit-text-stroke:0.3px #1c2b34;'>1344</div>
<div class=t style='left:2591.69px;top:1078.15px;font-size:25.22px;font-weight:400;color:#1c2b34;transform:scaleX(0.9634);transform-origin:right;-webkit-text-stroke:0.3px #1c2b34;'>3.78¢</div>
<div class=t style='left:389.70px;top:1137.60px;font-size:25.22px;font-weight:400;color:#1c2b34;transform:scaleX(0.9506);transform-origin:left;-webkit-text-stroke:0.3px #1c2b34;'>Nov 20 04:14:56.297</div>
<div class=t style='left:635.50px;top:1137.60px;font-size:25.22px;font-weight:400;color:#1c2b34;transform:scaleX(0.9671);transform-origin:left;-webkit-text-stroke:0.3px #1c2b34;'>claude-3-opus-20240229</div>
<div class=t style='left:931.40px;top:1137.60px;font-size:25.22px;font-weight:400;color:#1c2b34;transform:scaleX(0.9827);transform-origin:left;-webkit-text-stroke:0.3px #1c2b34;'>Can you give me the top 3 rated dining table...</div>
<div class=t style='left:1622.99px;top:1137.60px;font-size:25.22px;font-weight:400;color:#1c2b34;transform:scaleX(0.9553);transform-origin:right;-webkit-text-stroke:0.3px #1c2b34;'>1050</div>
<div class=t style='left:1890.42px;top:1137.60px;font-size:25.22px;font-weight:400;color:#1c2b34;transform:scaleX(0.9696);transform-origin:right;-webkit-text-stroke:0.3px #1c2b34;'>294</div>
<div class=t style='left:2105.69px;top:1137.60px;font-size:25.22px;font-weight:400;color:#1c2b34;transform:scaleX(0.9321);transform-origin:right;-webkit-text-stroke:0.3px #1c2b34;'>1344</div>
<div class=t style='left:2591.69px;top:1137.60px;font-size:25.22px;font-weight:400;color:#1c2b34;transform:scaleX(0.9634);transform-origin:right;-webkit-text-stroke:0.3px #1c2b34;'>3.78¢</div>
<div class=t style='left:389.70px;top:1197.05px;font-size:25.22px;font-weight:400;color:#1c2b34;transform:scaleX(0.9506);transform-origin:left;-webkit-text-stroke:0.3px #1c2b34;'>Nov 19 20:01:56.691</div>
<div class=t style='left:635.50px;top:1197.05px;font-size:25.22px;font-weight:400;color:#1c2b34;transform:scaleX(0.9671);transform-origin:left;-webkit-text-stroke:0.3px #1c2b34;'>claude-3-opus-20240229</div>
<div class=t style='left:931.40px;top:1197.05px;font-size:25.22px;font-weight:400;color:#1c2b34;transform:scaleX(0.9827);transform-origin:left;-webkit-text-stroke:0.3px #1c2b34;'>Can you give me the top 3 rated dining table...</div>
<div class=t style='left:1622.99px;top:1197.05px;font-size:25.22px;font-weight:400;color:#1c2b34;transform:scaleX(0.9553);transform-origin:right;-webkit-text-stroke:0.3px #1c2b34;'>1050</div>
<div class=t style='left:1890.42px;top:1197.05px;font-size:25.22px;font-weight:400;color:#1c2b34;transform:scaleX(0.9696);transform-origin:right;-webkit-text-stroke:0.3px #1c2b34;'>294</div>
<div class=t style='left:2105.69px;top:1197.05px;font-size:25.22px;font-weight:400;color:#1c2b34;transform:scaleX(0.9321);transform-origin:right;-webkit-text-stroke:0.3px #1c2b34;'>1344</div>
<div class=t style='left:2591.69px;top:1197.05px;font-size:25.22px;font-weight:400;color:#1c2b34;transform:scaleX(0.9634);transform-origin:right;-webkit-text-stroke:0.3px #1c2b34;'>3.78¢</div>
<div class=t style='left:389.70px;top:1256.50px;font-size:25.22px;font-weight:400;color:#1c2b34;transform:scaleX(0.9583);transform-origin:left;-webkit-text-stroke:0.3px #1c2b34;'>Nov 19 11:14:17.937</div>
<div class=t style='left:635.50px;top:1256.50px;font-size:25.22px;font-weight:400;color:#1c2b34;transform:scaleX(0.9671);transform-origin:left;-webkit-text-stroke:0.3px #1c2b34;'>claude-3-opus-20240229</div>
<div class=t style='left:931.40px;top:1256.50px;font-size:25.22px;font-weight:400;color:#1c2b34;transform:scaleX(0.9827);transform-origin:left;-webkit-text-stroke:0.3px #1c2b34;'>Can you give me the top 3 rated dining table...</div>
<div class=t style='left:1622.99px;top:1256.50px;font-size:25.22px;font-weight:400;color:#1c2b34;transform:scaleX(0.9553);transform-origin:right;-webkit-text-stroke:0.3px #1c2b34;'>1050</div>
<div class=t style='left:1890.42px;top:1256.50px;font-size:25.22px;font-weight:400;color:#1c2b34;transform:scaleX(0.9696);transform-origin:right;-webkit-text-stroke:0.3px #1c2b34;'>294</div>
<div class=t style='left:2105.69px;top:1256.50px;font-size:25.22px;font-weight:400;color:#1c2b34;transform:scaleX(0.9321);transform-origin:right;-webkit-text-stroke:0.3px #1c2b34;'>1344</div>
<div class=t style='left:2591.69px;top:1256.50px;font-size:25.22px;font-weight:400;color:#1c2b34;transform:scaleX(0.9634);transform-origin:right;-webkit-text-stroke:0.3px #1c2b34;'>3.78¢</div>
<div class=t style='left:389.70px;top:1315.95px;font-size:25.22px;font-weight:400;color:#1c2b34;transform:scaleX(0.9506);transform-origin:left;-webkit-text-stroke:0.3px #1c2b34;'>Nov 19 02:47:03.624</div>
<div class=t style='left:635.50px;top:1315.95px;font-size:25.22px;font-weight:400;color:#1c2b34;transform:scaleX(0.9671);transform-origin:left;-webkit-text-stroke:0.3px #1c2b34;'>claude-3-opus-20240229</div>
<div class=t style='left:931.40px;top:1315.95px;font-size:25.22px;font-weight:400;color:#1c2b34;transform:scaleX(0.9827);transform-origin:left;-webkit-text-stroke:0.3px #1c2b34;'>Can you give me the top 3 rated dining table...</div>
<div class=t style='left:1622.99px;top:1315.95px;font-size:25.22px;font-weight:400;color:#1c2b34;transform:scaleX(0.9553);transform-origin:right;-webkit-text-stroke:0.3px #1c2b34;'>1050</div>
<div class=t style='left:1890.42px;top:1315.95px;font-size:25.22px;font-weight:400;color:#1c2b34;transform:scaleX(0.9696);transform-origin:right;-webkit-text-stroke:0.3px #1c2b34;'>294</div>
<div class=t style='left:2105.69px;top:1315.95px;font-size:25.22px;font-weight:400;color:#1c2b34;transform:scaleX(0.9321);transform-origin:right;-webkit-text-stroke:0.3px #1c2b34;'>1344</div>
<div class=t style='left:2591.69px;top:1315.95px;font-size:25.22px;font-weight:400;color:#1c2b34;transform:scaleX(0.9634);transform-origin:right;-webkit-text-stroke:0.3px #1c2b34;'>3.78¢</div>
<div class=t style='left:389.70px;top:1375.40px;font-size:25.22px;font-weight:400;color:#1c2b34;transform:scaleX(0.9506);transform-origin:left;-webkit-text-stroke:0.3px #1c2b34;'>Nov 18 18:29:27.138</div>
<div class=t style='left:635.50px;top:1375.40px;font-size:25.22px;font-weight:400;color:#1c2b34;transform:scaleX(0.9671);transform-origin:left;-webkit-text-stroke:0.3px #1c2b34;'>claude-3-opus-20240229</div>
<div class=t style='left:931.40px;top:1375.40px;font-size:25.22px;font-weight:400;color:#1c2b34;transform:scaleX(0.9827);transform-origin:left;-webkit-text-stroke:0.3px #1c2b34;'>Can you give me the top 3 rated dining table...</div>
<div class=t style='left:1622.99px;top:1375.40px;font-size:25.22px;font-weight:400;color:#1c2b34;transform:scaleX(0.9553);transform-origin:right;-webkit-text-stroke:0.3px #1c2b34;'>1050</div>
<div class=t style='left:1890.42px;top:1375.40px;font-size:25.22px;font-weight:400;color:#1c2b34;transform:scaleX(0.9696);transform-origin:right;-webkit-text-stroke:0.3px #1c2b34;'>294</div>
<div class=t style='left:2105.69px;top:1375.40px;font-size:25.22px;font-weight:400;color:#1c2b34;transform:scaleX(0.9321);transform-origin:right;-webkit-text-stroke:0.3px #1c2b34;'>1344</div>
<div class=t style='left:2591.69px;top:1375.40px;font-size:25.22px;font-weight:400;color:#1c2b34;transform:scaleX(0.9634);transform-origin:right;-webkit-text-stroke:0.3px #1c2b34;'>3.78¢</div>
<div class=t style='left:389.70px;top:1434.85px;font-size:25.22px;font-weight:400;color:#1c2b34;transform:scaleX(0.9506);transform-origin:left;-webkit-text-stroke:0.3px #1c2b34;'>Nov 18 09:41:57.706</div>
<div class=t style='left:635.50px;top:1434.85px;font-size:25.22px;font-weight:400;color:#1c2b34;transform:scaleX(0.9671);transform-origin:left;-webkit-text-stroke:0.3px #1c2b34;'>claude-3-opus-20240229</div>
<div class=t style='left:931.40px;top:1434.85px;font-size:25.22px;font-weight:400;color:#1c2b34;transform:scaleX(0.9827);transform-origin:left;-webkit-text-stroke:0.3px #1c2b34;'>Can you give me the top 3 rated dining table...</div>
<div class=t style='left:1622.99px;top:1434.85px;font-size:25.22px;font-weight:400;color:#1c2b34;transform:scaleX(0.9553);transform-origin:right;-webkit-text-stroke:0.3px #1c2b34;'>1050</div>
<div class=t style='left:1890.42px;top:1434.85px;font-size:25.22px;font-weight:400;color:#1c2b34;transform:scaleX(0.9696);transform-origin:right;-webkit-text-stroke:0.3px #1c2b34;'>294</div>
<div class=t style='left:2105.69px;top:1434.85px;font-size:25.22px;font-weight:400;color:#1c2b34;transform:scaleX(0.9321);transform-origin:right;-webkit-text-stroke:0.3px #1c2b34;'>1344</div>
<div class=t style='left:2591.69px;top:1434.85px;font-size:25.22px;font-weight:400;color:#1c2b34;transform:scaleX(0.9634);transform-origin:right;-webkit-text-stroke:0.3px #1c2b34;'>3.78¢</div>
<div class=t style='left:389.70px;top:1494.30px;font-size:25.22px;font-weight:400;color:#1c2b34;transform:scaleX(0.9506);transform-origin:left;-webkit-text-stroke:0.3px #1c2b34;'>Nov 18 01:34:12.733</div>
<div class=t style='left:635.50px;top:1494.30px;font-size:25.22px;font-weight:400;color:#1c2b34;transform:scaleX(0.9671);transform-origin:left;-webkit-text-stroke:0.3px #1c2b34;'>claude-3-opus-20240229</div>
<div class=t style='left:931.40px;top:1494.30px;font-size:25.22px;font-weight:400;color:#1c2b34;transform:scaleX(0.9827);transform-origin:left;-webkit-text-stroke:0.3px #1c2b34;'>Can you give me the top 3 rated dining table...</div>
<div class=t style='left:1622.99px;top:1494.30px;font-size:25.22px;font-weight:400;color:#1c2b34;transform:scaleX(0.9553);transform-origin:right;-webkit-text-stroke:0.3px #1c2b34;'>1050</div>
<div class=t style='left:1890.42px;top:1494.30px;font-size:25.22px;font-weight:400;color:#1c2b34;transform:scaleX(0.9696);transform-origin:right;-webkit-text-stroke:0.3px #1c2b34;'>294</div>
<div class=t style='left:2105.69px;top:1494.30px;font-size:25.22px;font-weight:400;color:#1c2b34;transform:scaleX(0.9321);transform-origin:right;-webkit-text-stroke:0.3px #1c2b34;'>1344</div>
<div class=t style='left:2591.69px;top:1494.30px;font-size:25.22px;font-weight:400;color:#1c2b34;transform:scaleX(0.9634);transform-origin:right;-webkit-text-stroke:0.3px #1c2b34;'>3.78¢</div>
<!-- icon overlay -->
<svg class="a" style="left:0;top:0;" width="2680" height="1526" viewBox="0 0 2680 1526" fill="none" stroke-linecap="butt" stroke-linejoin="miter">
<g stroke="#1c2b34" stroke-width="2">
 <!-- globe -->
 <circle cx="44.5" cy="32" r="10.4"/><path d="M44.5 21.6C40.8 25 39.9 29 39.9 32C39.9 35 40.8 39 44.5 42.4C48.2 39 49.1 35 49.1 32C49.1 29 48.2 25 44.5 21.6Z"/><path d="M34.2 32H54.8"/>
 <!-- bug -->
 <path d="M38.2 102.5C38.2 97.5 41 94.8 44.6 94.8S51 97.5 51 102.5V106.5C51 110.8 48.2 113.6 44.6 113.6S38.2 110.8 38.2 106.5Z"/>
 <path d="M39 97.6L44.6 103.4L50.2 97.6M44.6 103.4V113.4M41.7 91.8V95M47.3 91.8V95M33.8 93.8L38.8 98.4M55.4 93.8L50.4 98.4M32 104H38.2M51 104H57M34 114.6L38.8 109.8M55.2 114.6L50.4 109.8"/>
 <!-- evaluations -->
 <path d="M35.5 169.6V183.4H55"/>
 <path d="M39.2 178.8C43.5 178.2 43.8 167.8 46.7 167.8C49.6 167.8 49.9 178.2 54.4 178.8" stroke-linecap="round"/>
 <!-- wrench -->
 <g transform="translate(32.6 307.4) scale(1.02)" stroke-width="1.96" stroke-linejoin="round"><path d="M14.7 6.3a1 1 0 0 0 0 1.4l1.6 1.6a1 1 0 0 0 1.4 0l3.77-3.77a6 6 0 0 1-7.94 7.94l-6.91 6.91a2.12 2.12 0 0 1-3-3l6.91-6.91a6 6 0 0 1 7.94-7.94l-3.76 3.76z"/></g>
 <!-- clock -->
 <circle cx="44.4" cy="392" r="10.4"/><path d="M45.6 385.8V393.4H40.4"/>
 <!-- shield -->
 <path d="M44.8 453.2L36.2 458V464.5C36.2 469.3 40 473.2 44.8 475.2C49.6 473.2 53.4 469.3 53.4 464.5V458Z" stroke-linejoin="round"/>
 <path d="M44.8 453.2V475.2M36.6 458.6L44.6 463.2M36.6 464.8L44.6 469.4"/>
 <!-- clusters -->
 <path d="M37.6 524.2L43 527.3V533.5L37.6 536.6L32.2 533.5V527.3Z" fill="#1c2b34" stroke="none"/>
 <path d="M51.6 525.4L56 527.9V532.9L51.6 535.4L47.2 532.9V527.9Z" stroke-width="1.9"/>
 <path d="M44.5 536L49.9 539.1V545.3L44.5 548.4L39.1 545.3V539.1Z" fill="#1c2b34" stroke="none"/>
 <!-- prompts -->
 <path d="M37.4 613.6H36.2C34.9 613.6 34.2 612.9 34.2 611.6V602C34.2 600.7 34.9 600 36.2 600H53C54.3 600 55 600.7 55 602V611.6C55 612.9 54.3 613.6 53 613.6H45.2L37.4 618.6Z" stroke-linejoin="round"/>
 <path d="M38.8 603.6L41.8 606.2L38.8 608.8M43.4 608.8H51"/>
 <!-- collapse -->
 <rect x="33.2" y="684.4" width="23" height="23.2" rx="3"/>
 <path d="M50.6 690.8L45.2 696.2L50.6 701.6"/>
 <path d="M33.90 688.20L37.80 685.20M33.90 691.35L40.90 685.96M33.90 694.50L40.90 689.11M33.90 697.65L40.90 692.26M33.90 700.80L40.90 695.41M33.90 703.95L40.90 698.56M34.03 707.00L40.90 701.71M38.12 707.00L40.90 704.86" stroke-width="0.9"/>
</g>
<!-- cost icon white -->
<g stroke="#ffffff" stroke-width="2.2" stroke-linejoin="miter">
 <path d="M44.6 236.6L54.6 242.4V253.9L44.6 259.6L34.6 253.9V242.4Z"/>
</g>
<g transform="translate(44.6 248.1) scale(0.74)" stroke="#fff" stroke-width="2.7" fill="none"><path d="M4.1 -4.2C3.6 -5.9 2.1 -6.8 0 -6.8C-2.5 -6.8 -4.1 -5.5 -4.1 -3.5C-4.1 -1.4 -2.2 -0.7 0 -0.2C2.3 0.3 4.3 1.1 4.3 3.4C4.3 5.6 2.5 6.8 0 6.8C-2.3 6.8 -4.1 5.8 -4.6 3.9M0 -9.6V-6.8M0 6.8V9.6"/></g>
<!-- header cost icon -->
<g stroke="#5f6b76" stroke-width="2.4">
 <path d="M360.3 15.6L373 22.9V37.5L360.3 44.8L347.6 37.5V22.9Z"/>
</g>
<g transform="translate(360.3 30.3) scale(0.96)" stroke="#5f6b76" stroke-width="2.5" fill="none"><path d="M4.1 -4.2C3.6 -5.9 2.1 -6.8 0 -6.8C-2.5 -6.8 -4.1 -5.5 -4.1 -3.5C-4.1 -1.4 -2.2 -0.7 0 -0.2C2.3 0.3 4.3 1.1 4.3 3.4C4.3 5.6 2.5 6.8 0 6.8C-2.3 6.8 -4.1 5.8 -4.6 3.9M0 -9.6V-6.8M0 6.8V9.6"/></g>
<!-- chevron -->
<path d="M2641.2 24.8L2651 34.4L2660.8 24.8" stroke="#5f6b76" stroke-width="2.4"/>
<!-- badge arrows -->
<g stroke="#2c7e3e" stroke-width="2">
 <path d="M1032.6 224.3L1048.2 239.9M1048.3 226.8V240.2H1034.8"/>
 <path d="M2194.2 224.3L2209.8 239.9M2209.9 226.8V240.2H2196.4"/>
</g>
<!-- export icons -->
<g stroke="#5f6a74" stroke-width="2.2">
 <path d="M1448.7 337.8V348.1H1470.2V337.8M1459.3 325.6V340.8M1452.1 331.7L1459.3 324.5L1466.5 331.7"/>
 <path d="M2624.8 331.6V341.2H2646.2V331.6M2635.3 319.4V334.6M2628.1 325.5L2635.3 318.3L2642.5 325.5"/>
 <path d="M2624.6 980V989.6H2646.2V980M2635.4 967.6V982.6M2628 973.5L2635.4 966.3L2642.8 973.5"/>
</g>
<!-- ticks -->
<g stroke="#5f6670" stroke-width="1.6">
 <path d="M487.8 821.6V830.4M638.8 821.6V830.4M789.9 821.6V830.4M940.9 821.6V830.4M1091.9 821.6V830.4M1242.9 821.6V830.4M1394 821.6V830.4"/>
</g>
<!-- sort icon -->
<g stroke="#1c2b34" stroke-width="2">
 <path d="M2375.6 1021.5V1044M2370.2 1038.8L2375.6 1044.3L2381 1038.8" stroke-width="1.9"/><path d="M2381.3 1022.4H2393.8M2381.3 1026H2391.3M2381.3 1029.6H2387.6" stroke-width="1.6"/>
</g>
</svg>
</div></body></html>
